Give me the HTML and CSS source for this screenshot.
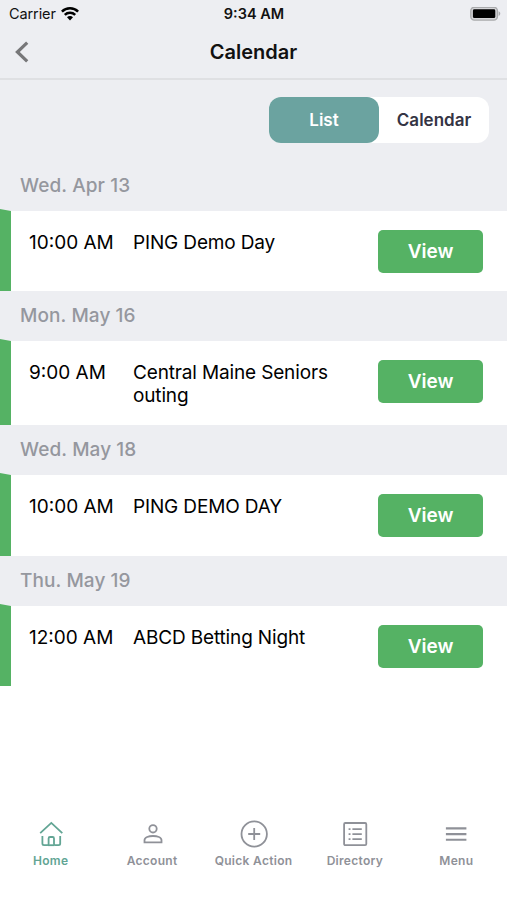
FILE: index.html
```html
<!DOCTYPE html>
<html lang="en">
<head>
    <meta charset="UTF-8">
    <meta name="viewport" content="width=device-width, initial-scale=1.0">
    <title>Calendar</title>
    <link rel="stylesheet" href="styles.css">
</head>
<body>
    <div class="status-bar">
        <div class="carrier">
            <span>Carrier</span>
            <svg width="18" height="14" viewBox="0 0 18 14" fill="none" stroke="#000" stroke-width="2.5">
                <path d="M.9 4.6a11.5 11.5 0 0 1 16.2 0"/>
                <path d="M3.8 7.9a7.4 7.4 0 0 1 10.4 0"/>
                <path d="M9 13.4L6 10.3a4.2 4.2 0 0 1 6 0z" fill="#000" stroke="none"/>
            </svg>
        </div>
        <span class="clock">9:34 AM</span>
        <svg class="battery" width="31" height="14" viewBox="0 0 31 14">
            <rect x="0.8" y="0.3" width="26.6" height="12.8" rx="3.6" fill="#d5d5d8" stroke="#a9aaac" stroke-width="1.4"/>
            <rect x="2.9" y="2.3" width="22.4" height="8.8" rx="1.4" fill="#000"/>
            <path d="M28.6 4.3c2.2.7 2.2 4 0 4.7z" fill="#a9aaac"/>
        </svg>
    </div>

    <header>
        <svg class="back" width="14" height="22" viewBox="0 0 14 22" fill="none" stroke="#777779" stroke-width="3.2">
            <path d="M12.2 1.6L2.4 11l9.8 9.4"/>
        </svg>
        <h1>Calendar</h1>
    </header>

    <main>
        <div class="switch-row">
            <div class="switch">
                <button class="tab active">List</button>
                <button class="tab">Calendar</button>
            </div>
        </div>

        <h2>Wed. Apr 13</h2>
        <div class="event">
            <span class="time">10:00 AM</span>
            <span class="name">PING Demo Day</span>
            <button class="view">View</button>
        </div>

        <h2>Mon. May 16</h2>
        <div class="event tall">
            <span class="time">9:00 AM</span>
            <span class="name">Central Maine Seniors outing</span>
            <button class="view">View</button>
        </div>

        <h2>Wed. May 18</h2>
        <div class="event">
            <span class="time">10:00 AM</span>
            <span class="name">PING DEMO DAY</span>
            <button class="view">View</button>
        </div>

        <h2>Thu. May 19</h2>
        <div class="event">
            <span class="time">12:00 AM</span>
            <span class="name">ABCD Betting Night</span>
            <button class="view">View</button>
        </div>
    </main>

    <nav>
        <a class="nav-item active">
            <svg width="28" height="28" viewBox="0 0 28 28">
                <path d="M3.2 13.2L14.3 2.9l11 10.3"/>
                <path d="M5.4 16v7.6q0 1.6 1.6 1.6h3.4q1.2 0 1.2-1.2v-5.6q0-1.4 1.4-1.4h2.6q1.4 0 1.4 1.4V24q0 1.2 1.2 1.2h3.4q1.6 0 1.6-1.6V16"/>
                <path d="M11 25.2h6.4"/>
            </svg>
            <span>Home</span>
        </a>
        <a class="nav-item">
            <svg width="28" height="28" viewBox="0 0 28 28">
                <circle cx="15" cy="8.8" r="3.7"/>
                <path d="M6.5 22.4v-2.2c0-2.8 4.2-4.2 8.5-4.2s8.5 1.4 8.5 4.2v2.2z"/>
            </svg>
            <span>Account</span>
        </a>
        <a class="nav-item">
            <svg width="28" height="28" viewBox="0 0 28 28">
                <circle cx="14.2" cy="14" r="12.7"/>
                <path d="M14.2 8v12M8.2 14h12"/>
            </svg>
            <span>Quick Action</span>
        </a>
        <a class="nav-item">
            <svg width="28" height="28" viewBox="0 0 28 28">
                <rect x="3.1" y="3" width="22.2" height="22.2" rx="1.2"/>
                <path d="M11.4 9.2h9.4M11.4 14.2h9.4M11.4 19.2h9.4M7.6 9.2h1.9M7.6 14.2h1.9M7.6 19.2h1.9"/>
            </svg>
            <span>Directory</span>
        </a>
        <a class="nav-item">
            <svg class="menu-icon" width="28" height="28" viewBox="0 0 28 28">
                <path d="M3.9 8.4h20.5M3.9 14.1h20.5M3.9 19.8h20.5"/>
            </svg>
            <span>Menu</span>
        </a>
    </nav>
</body>
</html>
```

FILE: styles.css
```css
* {
    box-sizing: border-box;
}

body {
    margin: 0;
    height: 900px;
    display: flex;
    flex-direction: column;
    font-family: Inter, "Liberation Sans", sans-serif;
    background-color: #fff;
    color: #111;
    overflow: hidden;
}

svg {
    display: block;
    flex: none;
}

button {
    font-family: inherit;
    border: none;
    padding: 0;
}

.status-bar {
    display: grid;
    grid-template-columns: 1fr auto 1fr;
    align-items: center;
    height: 27px;
    padding: 0 6px 0 9px;
    background-color: #edeef2;
    font-size: 14.5px;
}

.carrier {
    display: flex;
    align-items: center;
    gap: 5px;
    letter-spacing: -0.1px;
}

.clock {
    font-weight: 600;
    margin-left: -2px;
}

.battery {
    justify-self: end;
}

header {
    display: grid;
    grid-template-columns: 1fr auto 1fr;
    align-items: center;
    height: 53px;
    padding: 0 15px 1px;
    background-color: #edeef2;
    border-bottom: 2px solid #dfe0e3;
}

h1 {
    margin: 0;
    font-size: 20px;
    font-weight: 600;
}

.switch-row {
    display: flex;
    justify-content: flex-end;
    padding: 17px 18px 0 0;
    height: 81px;
    background-color: #edeef2;
}

.switch {
    display: flex;
    height: 46px;
    background-color: #fff;
    border-radius: 12px;
}

.tab {
    width: 110px;
    border-radius: 12px;
    background: none;
    color: #343444;
    font-size: 17px;
    font-weight: 600;
}

.tab.active {
    background-color: #6ba3a0;
    color: #fff;
}

h2 {
    margin: 0;
    height: 48px;
    padding-left: 20px;
    line-height: 49px;
    background-color: #edeef2;
    color: #95979e;
    font-size: 19px;
    font-weight: 500;
    letter-spacing: 0.1px;
}

/* top border keeps the heading colour, so the green edge gets a slanted corner */
.event {
    display: flex;
    align-items: flex-start;
    height: 82.3px;
    padding: 19px 24px 0 18px;
    border-top: 2px solid #edeef2;
    border-left: 11px solid #55b264;
    color: #000;
    font-size: 19px;
    line-height: 23px;
}

.event.tall {
    height: 86px;
}

.time,
.name {
    padding-top: 1px;
}

.time {
    width: 104px;
}

.name {
    flex: 1;
    padding-right: 40px;
    letter-spacing: -0.15px;
}

.view {
    width: 105px;
    height: 43px;
    border-radius: 5px;
    background-color: #55b264;
    color: #fff;
    font-size: 19px;
    font-weight: 600;
}

nav {
    display: flex;
    margin-top: auto;
    height: 80px;
}

.nav-item {
    flex: 1;
    display: flex;
    flex-direction: column;
    align-items: center;
    gap: 5px;
    color: #8f9198;
    font-size: 12px;
    font-weight: 600;
    letter-spacing: 0.3px;
    line-height: 16px;
    white-space: nowrap;
}

.nav-item svg {
    fill: none;
    stroke: currentColor;
    stroke-width: 1.8;
}

.nav-item .menu-icon {
    stroke-width: 2.1;
}

.nav-item.active {
    color: #62a594;
}
```
